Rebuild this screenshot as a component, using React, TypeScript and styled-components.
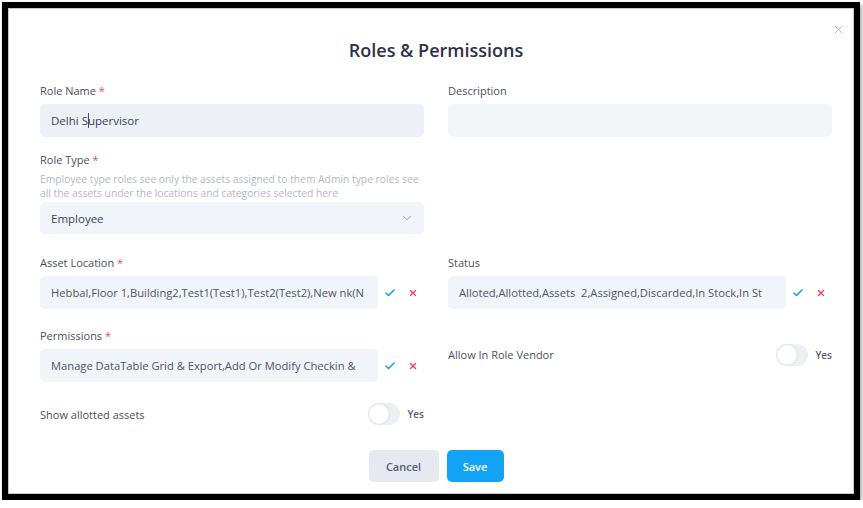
import styled, { createGlobalStyle } from 'styled-components';
import { Check, ChevronDown, X } from 'lucide-react';

const GlobalStyle = createGlobalStyle`
  html, body {
    margin: 0;
    padding: 0;
    background: #ffffff;
  }
  * {
    box-sizing: border-box;
  }
  body {
    font-family: 'Open Sans', 'Noto Sans', sans-serif;
  }
`;

const App = (): React.ReactElement => {
  return (
    <>
      <GlobalStyle />
      <Frame>
        <Modal>
          <CloseButton aria-label="close">
            <X size={13} strokeWidth={1.4} />
          </CloseButton>
          <Title>Roles &amp; Permissions</Title>

          <Form>
            <Row>
              <Field>
                <Label>
                  Role Name <Required>*</Required>
                </Label>
                <TextBox>
                  Delhi S<Caret />upervisor
                </TextBox>
              </Field>
              <Field>
                <Label>Description</Label>
                <TextBox $light />
              </Field>
            </Row>

            <Row $top={16}>
              <Field>
                <Label>
                  Role Type <Required>*</Required>
                </Label>
                <HelpText>
                  Employee type roles see only the assets assigned to them Admin type roles see
                  all the assets under the locations and categories selected here
                </HelpText>
                <SelectBox>
                  <span>Employee</span>
                  <ChevronDown size={14} strokeWidth={1.5} color="#8b90a0" />
                </SelectBox>
              </Field>
            </Row>

            <Row $top={22}>
              <Field>
                <Label>
                  Asset Location <Required>*</Required>
                </Label>
                <MultiRow>
                  <ValueBox>Hebbal,Floor 1,Building2,Test1(Test1),Test2(Test2),New nk(N</ValueBox>
                  <IconButton $color="#1a9bf0">
                    <Check size={12} strokeWidth={3.2} />
                  </IconButton>
                  <IconButton $color="#f2426b">
                    <X size={10} strokeWidth={3.4} />
                  </IconButton>
                </MultiRow>
              </Field>
              <Field>
                <Label>Status</Label>
                <MultiRow>
                  <ValueBox>Alloted,Allotted,Assets&nbsp;&nbsp;2,Assigned,Discarded,In Stock,In St</ValueBox>
                  <IconButton $color="#1a9bf0">
                    <Check size={12} strokeWidth={3.2} />
                  </IconButton>
                  <IconButton $color="#f2426b">
                    <X size={10} strokeWidth={3.4} />
                  </IconButton>
                </MultiRow>
              </Field>
            </Row>

            <Row $top={20}>
              <Field>
                <Label>
                  Permissions <Required>*</Required>
                </Label>
                <MultiRow>
                  <ValueBox>Manage DataTable Grid &amp; Export,Add Or Modify Checkin &amp;</ValueBox>
                  <IconButton $color="#1a9bf0">
                    <Check size={12} strokeWidth={3.2} />
                  </IconButton>
                  <IconButton $color="#f2426b">
                    <X size={10} strokeWidth={3.4} />
                  </IconButton>
                </MultiRow>
              </Field>
              <ToggleRow $center>
                <ToggleLabel>Allow In Role Vendor</ToggleLabel>
                <ToggleWrap>
                  <Switch>
                    <Knob />
                  </Switch>
                  <YesText>Yes</YesText>
                </ToggleWrap>
              </ToggleRow>
            </Row>

            <Row $top={21}>
              <ToggleRow>
                <ToggleLabel>Show allotted assets</ToggleLabel>
                <ToggleWrap>
                  <Switch>
                    <Knob />
                  </Switch>
                  <YesText>Yes</YesText>
                </ToggleWrap>
              </ToggleRow>
            </Row>
          </Form>

          <Footer>
            <Button $variant="secondary">Cancel</Button>
            <Button $variant="primary">Save</Button>
          </Footer>
        </Modal>
      </Frame>
    </>
  );
};

export default App;

const Frame = styled.div`
  margin: 2px 0 0 2px;
  width: 858px;
  border: 6px solid #000000;
  box-shadow: 2px 3px 4px rgba(0, 0, 0, 0.35);
`;

const Modal = styled.div`
  position: relative;
  display: flex;
  flex-direction: column;
  height: 486px;
  padding: 30px 21px 0 31px;
  background: #ffffff;
  border: 1px solid #c9c9c9;
`;

const CloseButton = styled.button`
  position: absolute;
  top: 14px;
  right: 8px;
  display: flex;
  padding: 0;
  border: 0;
  background: transparent;
  color: #a3a7b4;
`;

const Title = styled.h2`
  margin: 0;
  text-align: center;
  font-size: 18px;
  line-height: 22px;
  font-weight: 600;
  color: #2e3248;
`;

const Form = styled.div`
  display: flex;
  flex-direction: column;
  margin-top: 23px;
`;

const Row = styled.div<{ $top?: number }>`
  display: grid;
  grid-template-columns: 384px 384px;
  column-gap: 24px;
  margin-top: ${p => p.$top ?? 0}px;
`;

const Field = styled.div`
  display: flex;
  flex-direction: column;
`;

const Label = styled.label`
  font-size: 11px;
  line-height: 14px;
  font-weight: 500;
  color: #4b4f62;
  margin-bottom: 6px;
`;

const Required = styled.span`
  color: #f2426b;
`;

const HelpText = styled.p`
  margin: -1px 0 2px;
  font-size: 10.3px;
  line-height: 14px;
  color: #b4b7c4;
`;

const TextBox = styled.div<{ $light?: boolean }>`
  display: flex;
  align-items: center;
  height: 33px;
  padding: 0 11px;
  border-radius: 5px;
  background: ${p => (p.$light ? '#f3f6f9' : '#edf1f6')};
  font-size: 11.5px;
  color: #3c4160;
  white-space: pre;
`;

const Caret = styled.span`
  display: inline-block;
  width: 1px;
  height: 15px;
  margin: 0 -1px 0 0;
  background: #4a4e60;
`;

const SelectBox = styled.div`
  display: flex;
  align-items: center;
  justify-content: space-between;
  height: 32px;
  padding: 0 10px 0 11px;
  border-radius: 5px;
  background: #f1f4f8;
  font-size: 11.5px;
  color: #3c4160;
`;

const MultiRow = styled.div`
  display: flex;
  align-items: center;
`;

const ValueBox = styled.div`
  flex: 0 0 338px;
  height: 33px;
  line-height: 33px;
  padding: 0 4px 0 11px;
  border-radius: 5px;
  background: #f1f4f8;
  font-size: 11.2px;
  color: #50556b;
  white-space: nowrap;
`;

const IconButton = styled.span<{ $color: string }>`
  display: flex;
  align-items: center;
  justify-content: center;
  width: 23px;
  color: ${p => p.$color};
`;

const ToggleRow = styled.div<{ $center?: boolean }>`
  display: flex;
  align-items: center;
  justify-content: space-between;
  align-self: ${p => (p.$center ? 'center' : 'start')};
  margin-top: ${p => (p.$center ? '-2px' : '0')};
`;

const ToggleLabel = styled.span`
  font-size: 11px;
  font-weight: 500;
  color: #4b4f62;
`;

const ToggleWrap = styled.div`
  display: flex;
  align-items: center;
  gap: 7px;
`;

const Switch = styled.span`
  display: flex;
  align-items: center;
  width: 32px;
  height: 22px;
  padding: 1px;
  border-radius: 11px;
  background: #eceff4;
`;

const Knob = styled.span`
  width: 20px;
  height: 20px;
  border-radius: 50%;
  background: #ffffff;
  box-shadow: 0 0 2px rgba(60, 70, 90, 0.25);
`;

const YesText = styled.span`
  font-size: 10px;
  font-weight: 600;
  color: #5a5e70;
`;

const Footer = styled.div`
  display: flex;
  justify-content: center;
  gap: 8px;
  margin-top: 25px;
`;

const Button = styled.button<{ $variant: 'primary' | 'secondary' }>`
  height: 32px;
  padding: 0;
  width: ${p => (p.$variant === 'primary' ? '57px' : '70px')};
  border: 0;
  border-radius: 5px;
  font-family: inherit;
  font-size: 11px;
  font-weight: 600;
  background: ${p => (p.$variant === 'primary' ? '#12a3f5' : '#e6e9f0')};
  color: ${p => (p.$variant === 'primary' ? '#ffffff' : '#5a5e70')};
`;
